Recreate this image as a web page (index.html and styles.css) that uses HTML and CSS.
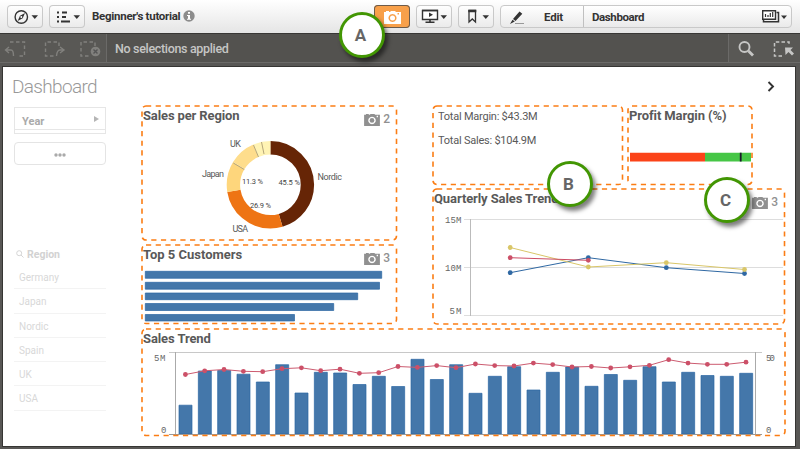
FILE: index.html
```
<!DOCTYPE html>
<html lang="en">
<head>
<meta charset="utf-8">
<title>Dashboard</title>
<link rel="stylesheet" href="styles.css">
</head>
<body>
<svg class="defs" width="0" height="0">
  <symbol id="camera" viewBox="0 0 17 14">
    <path fill="currentColor" fill-rule="evenodd" d="M0 2h2V1h3v1h1l1-1h4l1 1h5v12H0zM8.500 4a4 4 0 1 0 .01 0zM13.500 3v1.500h1.500V3z"/>
    <circle cx="8.500" cy="8" r="2.500" fill="currentColor"/>
  </symbol>
</svg>
<header class="topbar">
  <div class="button">
    <svg width="36" height="22" viewBox="7 5 36 22"><circle cx="21.300" cy="17" r="6.200" fill="none" stroke="#333" stroke-width="1.400"/><path d="M25 13l-2.300 5.300L17.700 21l2.300-5.300z" fill="#333"/><circle cx="21.300" cy="17" r="1" fill="#fff"/><path d="M31.500 15.300h6.500l-3.200 3.700z" fill="#333"/></svg>
  </div>
  <div class="button">
    <svg width="36" height="22" viewBox="49 5 36 22"><path d="M57 12.500h2M57 17h2M57 21.500h2M62 12.500h5M62 17h4M61 21.500h9" stroke="#333" stroke-width="1.800"/><path d="M73.500 15.300H80l-3.200 3.700z" fill="#333"/></svg>
  </div>
  <div class="app-name">Beginner's tutorial</div>
  <svg class="info" width="12" height="12" viewBox="0 0 12 12"><circle cx="6" cy="6" r="5.700" fill="#8c8c8c"/><path d="M5 2h2v1.800H5zM4 5h3v3.700h1v1H4v-1h1V6H4z" fill="#fff"/></svg>
  <div class="button snapshot"><svg width="17" height="14"><use href="#camera"/></svg></div>
  <div class="button">
    <svg width="36" height="22" viewBox="416 5 36 22"><path d="M422.500 10.500h15v9h-15z" fill="#fff" stroke="#333" stroke-width="1.400"/><path d="M422 10.500h16M430 19.500v3M425.500 22.300h9" stroke="#333" stroke-width="1.600"/><path d="M429 12.500l4 2.200-4 2.200zM440.500 15.300h6.500l-3.200 3.700z" fill="#333"/></svg>
  </div>
  <div class="button">
    <svg width="36" height="22" viewBox="458 5 36 22"><path d="M469 10.500h6.500v11.500l-3.200-3-3.300 3z" fill="none" stroke="#333" stroke-width="1.300"/><path d="M468.300 11h8" stroke="#333" stroke-width="2.500"/><path d="M482.500 15.300h6.500l-3.200 3.700z" fill="#333"/></svg>
  </div>
  <div class="edit-group">
    <div class="edit">
      <svg width="14" height="15" viewBox="0 0 14 15"><path d="M3 9l6.500-7.500 2.800 2.200L5.500 11zM2.500 9.700l2.300 1.800L0 14z" fill="#333"/><path d="M5 13.500h9" stroke="#999"/></svg>
      <span>Edit</span>
    </div>
    <div class="sheet-picker">
      <span>Dashboard</span>
      <svg width="26" height="14" viewBox="761 10 26 14"><path d="M763.500 20v1.800h15V12.500h-2" fill="none" stroke="#333" stroke-width="1.500"/><path d="M762.700 10.700h12.800v8.500h-12.800z" fill="#fff" stroke="#333" stroke-width="1.400"/><path d="M765.500 14v3M768 15v2M770.300 13v4M772.700 12v5" stroke="#333" stroke-width="1.200"/><path d="M781 15.500h6l-3 3.500z" fill="#333"/></svg>
    </div>
  </div>
</header>

<nav class="selections">
  <div class="history">
    <svg width="106" height="28" viewBox="0 34 106 28" fill="none" stroke="#81807d" stroke-width="1.400">
      <g stroke-dasharray="3.500 2.500"><path d="M10 42h14.500v14H18"/><path d="M59 46v-4H45.500v14H55"/><path d="M95 46v-4H81v14h8"/></g>
      <path d="M9 47l-3.500 3 3.500 3M6 50h5q2.500 0 2.500 6M60 47l4 3-4 3M63 50h-3q-3 0-3.500 6"/>
      <circle cx="95.500" cy="51.500" r="4.800" fill="#81807d" stroke="none"/><path d="M93.500 49.500l4 4m0-4l-4 4" stroke="#555"/>
    </svg>
  </div>
  <div class="selection-text">No selections applied</div>
  <div class="tools">
    <svg width="71" height="28" viewBox="729 34 71 28" fill="none" stroke="#c6c6c5">
      <circle cx="744.500" cy="47" r="5" stroke-width="1.900"/><path d="M748.500 51l4.500 4.500" stroke-width="2.800"/>
      <path d="M782 56h-7.500V42H789v4" stroke-width="1.500" stroke-dasharray="3.500 2.200"/><path d="M785 47.500h8l-2.500 2.500 3.500 3.500-2 2-3.500-3.500-3 3z" fill="#c6c6c5" stroke="none"/>
    </svg>
  </div>
</nav>

<main class="sheet">
  <div class="sheet-head">
    <h1>Dashboard</h1>
    <svg width="8" height="11" viewBox="0 0 8 11"><path d="M1.500 1L6 5.500 1.500 10" fill="none" stroke="#333" stroke-width="1.900"/></svg>
  </div>
  <div class="sheet-body">
    <aside class="filters">
      <div class="year"><span>Year</span><svg width="5" height="6" viewBox="0 0 5 6"><path d="M0 0l5 3-5 3z" fill="#b5b5b5"/></svg></div>
      <div class="more"><svg width="12" height="4" viewBox="0 0 12 4"><g fill="#aaa"><circle cx="2" cy="2" r="1.700"/><circle cx="6" cy="2" r="1.700"/><circle cx="10" cy="2" r="1.700"/></g></svg></div>
      <div class="region-title"><svg width="8" height="8" viewBox="0 0 8 8" fill="none" stroke="#d5d5d5"><circle cx="3.200" cy="3.200" r="2.500"/><path d="M5 5l2.500 2.500"/></svg><span>Region</span></div>
      <ul class="region-list"><li>Germany</li><li>Japan</li><li>Nordic</li><li>Spain</li><li>UK</li><li>USA</li></ul>
    </aside>
    <div class="dashboard">
      <div class="upper">
        <div class="left-column">
          <section class="card region-card">
            <svg class="chart" width="256" height="136" viewBox="141 105 256 136">
              <g transform="rotate(-90 270.400 184.800)" fill="none" stroke-width="13.400">
                <circle cx="270.400" cy="184.800" r="37" pathLength="100" stroke="#662506" stroke-dasharray="45.500 54.500"/>
                <circle cx="270.400" cy="184.800" r="37" pathLength="100" stroke="#ee7414" stroke-dasharray="26.900 73.100" stroke-dashoffset="-45.500"/>
                <circle cx="270.400" cy="184.800" r="37" pathLength="100" stroke="#fed67c" stroke-dasharray="11.300 88.700" stroke-dashoffset="-72.400"/>
                <circle cx="270.400" cy="184.800" r="37" pathLength="100" stroke="#fedd8c" stroke-dasharray="9.900 90.100" stroke-dashoffset="-83.700"/>
                <circle cx="270.400" cy="184.800" r="37" pathLength="100" stroke="#fff3b4" stroke-dasharray="6.400 93.600" stroke-dashoffset="-93.600"/>
              </g>
              <path d="M233.300 163l11 6.500M253.500 145l5 12M261.500 142l2.500 12" stroke="#b5a67c" fill="none"/>
              <g class="label"><text x="230" y="147" textLength="11">UK</text><text x="202" y="177" textLength="22">Japan</text><text x="317.500" y="180.300" textLength="24.500">Nordic</text><text x="232.500" y="232" textLength="15.500">USA</text></g>
              <g class="percent"><text x="242" y="183.700" textLength="21">11.3 %</text><text x="278.500" y="185" textLength="21.500">45.5 %</text><text x="250" y="207.500" textLength="21">26.9 %</text></g>
            </svg>
            <h2>Sales per Region</h2>
            <div class="count"><svg width="16" height="13"><use href="#camera"/></svg><span>2</span></div>
            <svg class="frame"><rect x="1" y="1" width="254.500" height="134" rx="4"/></svg>
          </section>
          <section class="card customer-card">
            <svg class="chart" width="256" height="80" viewBox="141 244 256 80">
              <g fill="#4477aa" stroke="#2b67a3" stroke-width=".7"><path d="M145.300 271.300H381.700V278.300H145.300zM145.300 282.300H379.500V289.200H145.300zM145.300 293H357.700V299.700H145.300zM145.300 303.500H333.700V310.500H145.300zM145.300 314.500H294.500V321H145.300z"/></g>
            </svg>
            <h2>Top 5 Customers</h2>
            <div class="count"><svg width="16" height="13"><use href="#camera"/></svg><span>3</span></div>
            <svg class="frame"><rect x="1" y="1" width="254.500" height="78.500" rx="4"/></svg>
          </section>
        </div>
        <div class="right-column">
          <div class="kpis">
            <section class="card totals">
              <p class="margin-total">Total Margin: $43.3M</p>
              <p class="sales-total">Total Sales: $104.9M</p>
              <svg class="frame"><rect x="1" y="1" width="189.500" height="78.500" rx="4"/></svg>
              <div class="callout callout-b">B</div>
            </section>
            <section class="card profit">
              <svg class="chart" width="126" height="80" viewBox="627 105 126 80"><path d="M630 152.700h75v8.800h-75z" fill="#fb4319"/><path d="M705 152.700h46v8.800h-46z" fill="#46c646"/><path d="M740.700 152.700v8.800" stroke="#1b1a2b" stroke-width="1.800"/></svg>
              <h2>Profit Margin (%)</h2>
              <svg class="frame"><rect x="1" y="1" width="124" height="78.500" rx="4"/></svg>
            </section>
          </div>
          <section class="card quarterly">
            <svg class="chart" width="353" height="136" viewBox="432 188 353 136" fill="none">
              <path d="M464 219.500H783M464 267.500H783M464 315.500H783" stroke="#ddd"/><path d="M470.500 219v97" stroke="#bbb"/>
              <g class="axis"><text x="445" y="223" textLength="16.500">15M</text><text x="445" y="271" textLength="16.500">10M</text><text x="449.500" y="313.500" textLength="12">5M</text></g>
              <path d="M510.200 272.700L588.300 257.700 666.300 267.700 744.500 273.500" stroke="#2f68a3"/>
              <path d="M510.200 247.500L588.300 267 666.300 262.700 744.500 269.500" stroke="#d9c668"/>
              <path d="M510.200 257.700L588.300 260.300" stroke="#cc4c64"/>
              <g fill="#2f68a3"><circle cx="510.200" cy="272.700" r="2.400"/><circle cx="588.300" cy="257.700" r="2.400"/><circle cx="666.300" cy="267.700" r="2.400"/><circle cx="744.500" cy="273.500" r="2.400"/></g>
              <g fill="#d9c668"><circle cx="510.200" cy="247.500" r="2.400"/><circle cx="588.300" cy="267" r="2.400"/><circle cx="666.300" cy="262.700" r="2.400"/><circle cx="744.500" cy="269.500" r="2.400"/></g>
              <g fill="#cc5068"><circle cx="510.200" cy="257.700" r="2.400"/><circle cx="588.300" cy="260.300" r="2.400"/></g>
            </svg>
            <h2>Quarterly Sales Trend</h2>
            <div class="count"><svg width="16" height="13"><use href="#camera"/></svg><span>3</span></div>
            <svg class="frame"><rect x="1" y="1" width="351.500" height="135" rx="4"/></svg>
            <div class="callout callout-c">C</div>
          </section>
        </div>
      </div>
      <section class="card trend">
        <svg class="chart" width="644" height="108" viewBox="141 328 644 108">
          <path d="M169 352.500H762" stroke="#c8c8c8"/><path d="M175.500 352v83M755.500 352v83" stroke="#aaa"/>
          <path fill="#4477aa" stroke="#2b67a3" stroke-width=".7" d="M179 434V405.200h13V434zM198.330 434V371h13V434zM217.670 434V370.500h13V434zM237 434V374.200h13V434zM256.330 434V382h13V434zM275.670 434V364.700h13V434zM295 434V393h13V434zM314.330 434V372.300h13V434zM333.670 434V373h13V434zM353 434V384.500h13V434zM372.330 434V376.300h13V434zM391.670 434V386.500h13V434zM411 434V359.300h13V434zM430.330 434V379.500h13V434zM449.670 434V364.700h13V434zM469 434V393.300h13V434zM488.330 434V376.300h13V434zM507.670 434V366.700h13V434zM527 434V390h13V434zM546.330 434V372.300h13V434zM565.670 434V367h13V434zM585 434V386.300h13V434zM604.330 434V374.500h13V434zM623.670 434V380.300h13V434zM643 434V366.700h13V434zM662.330 434V382h13V434zM681.670 434V372.300h13V434zM701 434V375.500h13V434zM720.330 434V376.300h13V434zM739.670 434V373.300h13V434z"/>
          <path d="M169 434.500H762" stroke="#999"/>
          <defs><marker id="dot" markerUnits="userSpaceOnUse" markerWidth="6" markerHeight="6" refX="3" refY="3"><circle cx="3" cy="3" r="2.400" fill="#cc5068"/></marker></defs>
          <polyline fill="none" stroke="#cc5b70" marker-start="url(#dot)" marker-mid="url(#dot)" marker-end="url(#dot)" points="185.400,374.500 204.700,370.800 224,369.500 243.400,371.300 262.700,371.700 282,368.700 301.400,367.800 320.700,370.700 340,369.200 359.400,373.300 378.700,372.700 398,366.500 417.400,367.400 436.700,365.600 456,367.700 475.400,364 494.700,365.600 514,366 533.400,363.100 552.700,364.600 572,367 591.400,366.500 610.700,368 630,366.800 649.400,365.300 668.700,359.700 688,363.100 707.400,364.300 726.700,364.300 746,362.200"/>
          <g class="axis"><text x="154" y="361" textLength="11.500">5M</text><text x="161" y="432.500">0</text><text x="766" y="361" textLength="9">50</text><text x="766" y="432.500">0</text></g>
        </svg>
        <h2>Sales Trend</h2>
        <svg class="frame"><rect x="1" y="1" width="643" height="106.500" rx="4"/></svg>
      </section>
    </div>
  </div>
</main>
<div class="callout callout-a">A</div>
</body>
</html>
```
FILE: styles.css
```
* { box-sizing: border-box; }
body {
  margin: 0;
  width: 800px;
  height: 449px;
  overflow: hidden;
  position: relative;
  background: #585755;
  color: #595959;
  font-family: Roboto, "Liberation Sans", sans-serif;
}
svg { display: block; flex: none; }
.defs { position: absolute; }
h1, h2, p, ul { margin: 0; padding: 0; }

.topbar {
  display: flex;
  height: 34px;
  padding: 5px 8px 0 7px;
  background: linear-gradient(#fff, #e5e5e5);
  border-bottom: 1px solid #383735;
  color: #333;
  font-size: 11.500px;
  font-weight: 700;
  line-height: 23px;
}
.button {
  flex: none;
  width: 36px;
  height: 23px;
  margin-right: 6px;
  border-radius: 4px;
  box-shadow: inset 0 0 0 1px #c9c9c9;
  background: linear-gradient(#fff, #eaeaea);
}
.app-name { width: 92px; margin-left: 1px; white-space: nowrap; letter-spacing: -.28px; }
.info { margin: 5px 0 0 -1px; }
.snapshot {
  display: flex;
  align-items: center;
  justify-content: center;
  margin-left: auto;
  color: #fff;
  background: #f8a04a;
  box-shadow: inset 0 0 0 1px #6c5b4b;
}
.edit-group {
  display: flex;
  flex: none;
  width: 292px;
  height: 23px;
  border: 1px solid #c9c9c9;
  border-radius: 4px;
  background: linear-gradient(#fff, #eaeaea);
  line-height: 22px;
}
.edit { display: flex; width: 83px; gap: 20px; padding: 4px 0 0 9px; border-right: 1px solid #c0c0c0; letter-spacing: -.2px; }
.edit span { margin-top: -4px; }
.sheet-picker { display: flex; flex: 1; justify-content: space-between; padding: 0 4px 0 8px; letter-spacing: -.4px; }
.sheet-picker svg { margin-top: 4px; }

.selections { display: flex; height: 29px; background: #53524f; border-bottom: 1px solid #6b6a68; }
.history { width: 107px; background: #595855; border-right: 1px solid #6b6a68; }
.selection-text { flex: 1; padding-left: 8px; color: #c6c6c5; font-size: 12.500px; font-weight: 500; line-height: 29px; letter-spacing: -.33px; }
.tools { width: 72px; background: #595855; border-left: 1px solid #6b6a68; }

.sheet { width: 794px; height: 381px; margin: 3px 0 0 2px; border: 1px solid #363533; background: #fff; }
.sheet-head { display: flex; justify-content: space-between; height: 38px; padding: 0 20px 0 9px; }
.sheet-head h1 { color: #999; font-size: 19px; font-weight: 300; line-height: 40px; letter-spacing: -.65px; }
.sheet-head svg { margin-top: 14px; }
.sheet-body { display: flex; gap: 35px; padding-left: 11px; }

.filters { flex: none; width: 92px; padding-top: 2px; }
.year { display: flex; justify-content: space-between; height: 27px; padding: 8px 6px 0 7px; border: 1px solid #e6e6e6; color: #aaa; font-size: 11px; font-weight: 700; line-height: 11px; box-shadow: inset 0 -3px #fff, inset 0 -4px #e6e6e6; }
.more { display: flex; align-items: center; justify-content: center; height: 23px; margin-top: 8px; border: 1px solid #e4e4e4; border-radius: 4px; padding-top: 3px; }
.region-title { display: flex; align-items: center; gap: 3px; height: 14px; margin-top: 82px; padding-left: 2px; color: #d2d2d2; font-size: 10.500px; font-weight: 700; }
.region-list { list-style: none; padding-top: 4px; color: #d8d8d8; font-size: 10px; }
.region-list li { height: 24.250px; padding-left: 5px; line-height: 25px; border-bottom: 1px solid #f3f3f3; }

.dashboard { width: 644px; }
.upper { display: flex; gap: 35px; height: 223px; }
.left-column { display: grid; width: 256px; height: 219px; grid-template-rows: 136px 80px; row-gap: 3px; }
.right-column { width: 353px; }
.kpis { display: grid; grid-template-columns: 192px 126px; column-gap: 3px; height: 83px; }
.card { position: relative; display: grid; align-items: start; justify-items: start; }
.totals { height: 80px; }
.profit { height: 80px; }
.quarterly { height: 137px; }
.trend { height: 108px; }
.chart, .card h2 { grid-area: 1 / 1; }
.card h2 { padding: 2px 0 0 2px; font-size: 13px; font-weight: 700; line-height: 18px; white-space: nowrap; }
.region-card h2 { letter-spacing: -.13px; }
.customer-card h2 { letter-spacing: 0; }
.profit h2 { letter-spacing: -.1px; }
.quarterly h2 { letter-spacing: -.1px; }
.trend h2 { letter-spacing: -.1px; }
.count { grid-area: 1 / 1; display: flex; gap: 3px; justify-self: end; padding: 8px 7px 0 0; color: #909090; font-size: 12px; font-weight: 500; line-height: 12px; }
.frame { position: absolute; left: 0; top: 0; width: 100%; height: 100%; overflow: visible; }
.frame rect { fill: none; stroke: #fb7d14; stroke-width: 1.600; stroke-dasharray: 5.200 4.500; }
.totals { align-content: start; padding-left: 6px; font-size: 11px; line-height: 13px; letter-spacing: -.23px; }
.margin-total { padding-top: 5px; }
.sales-total { padding-top: 11px; }
.label { fill: #595959; font-size: 9px; }
.percent { fill: #444; font-size: 7.500px; }
.axis { fill: #666; font-family: "Liberation Mono", monospace; font-size: 9px; }

.callout {
  position: absolute;
  display: flex;
  align-items: center;
  justify-content: center;
  width: 46px;
  height: 46px;
  padding-right: 3px;
  border: 3px solid #429603;
  border-radius: 50%;
  background: #fff;
  box-shadow: 3px 4px 4px rgba(0, 0, 0, .5);
  color: #666;
  font-size: 17px;
  font-weight: 700;
  letter-spacing: 0;
  z-index: 5;
}
.callout-a { left: 339px; top: 12px; }
.callout-b { left: 115px; top: 56px; }
.callout-c { left: 272px; top: -11px; }
```
